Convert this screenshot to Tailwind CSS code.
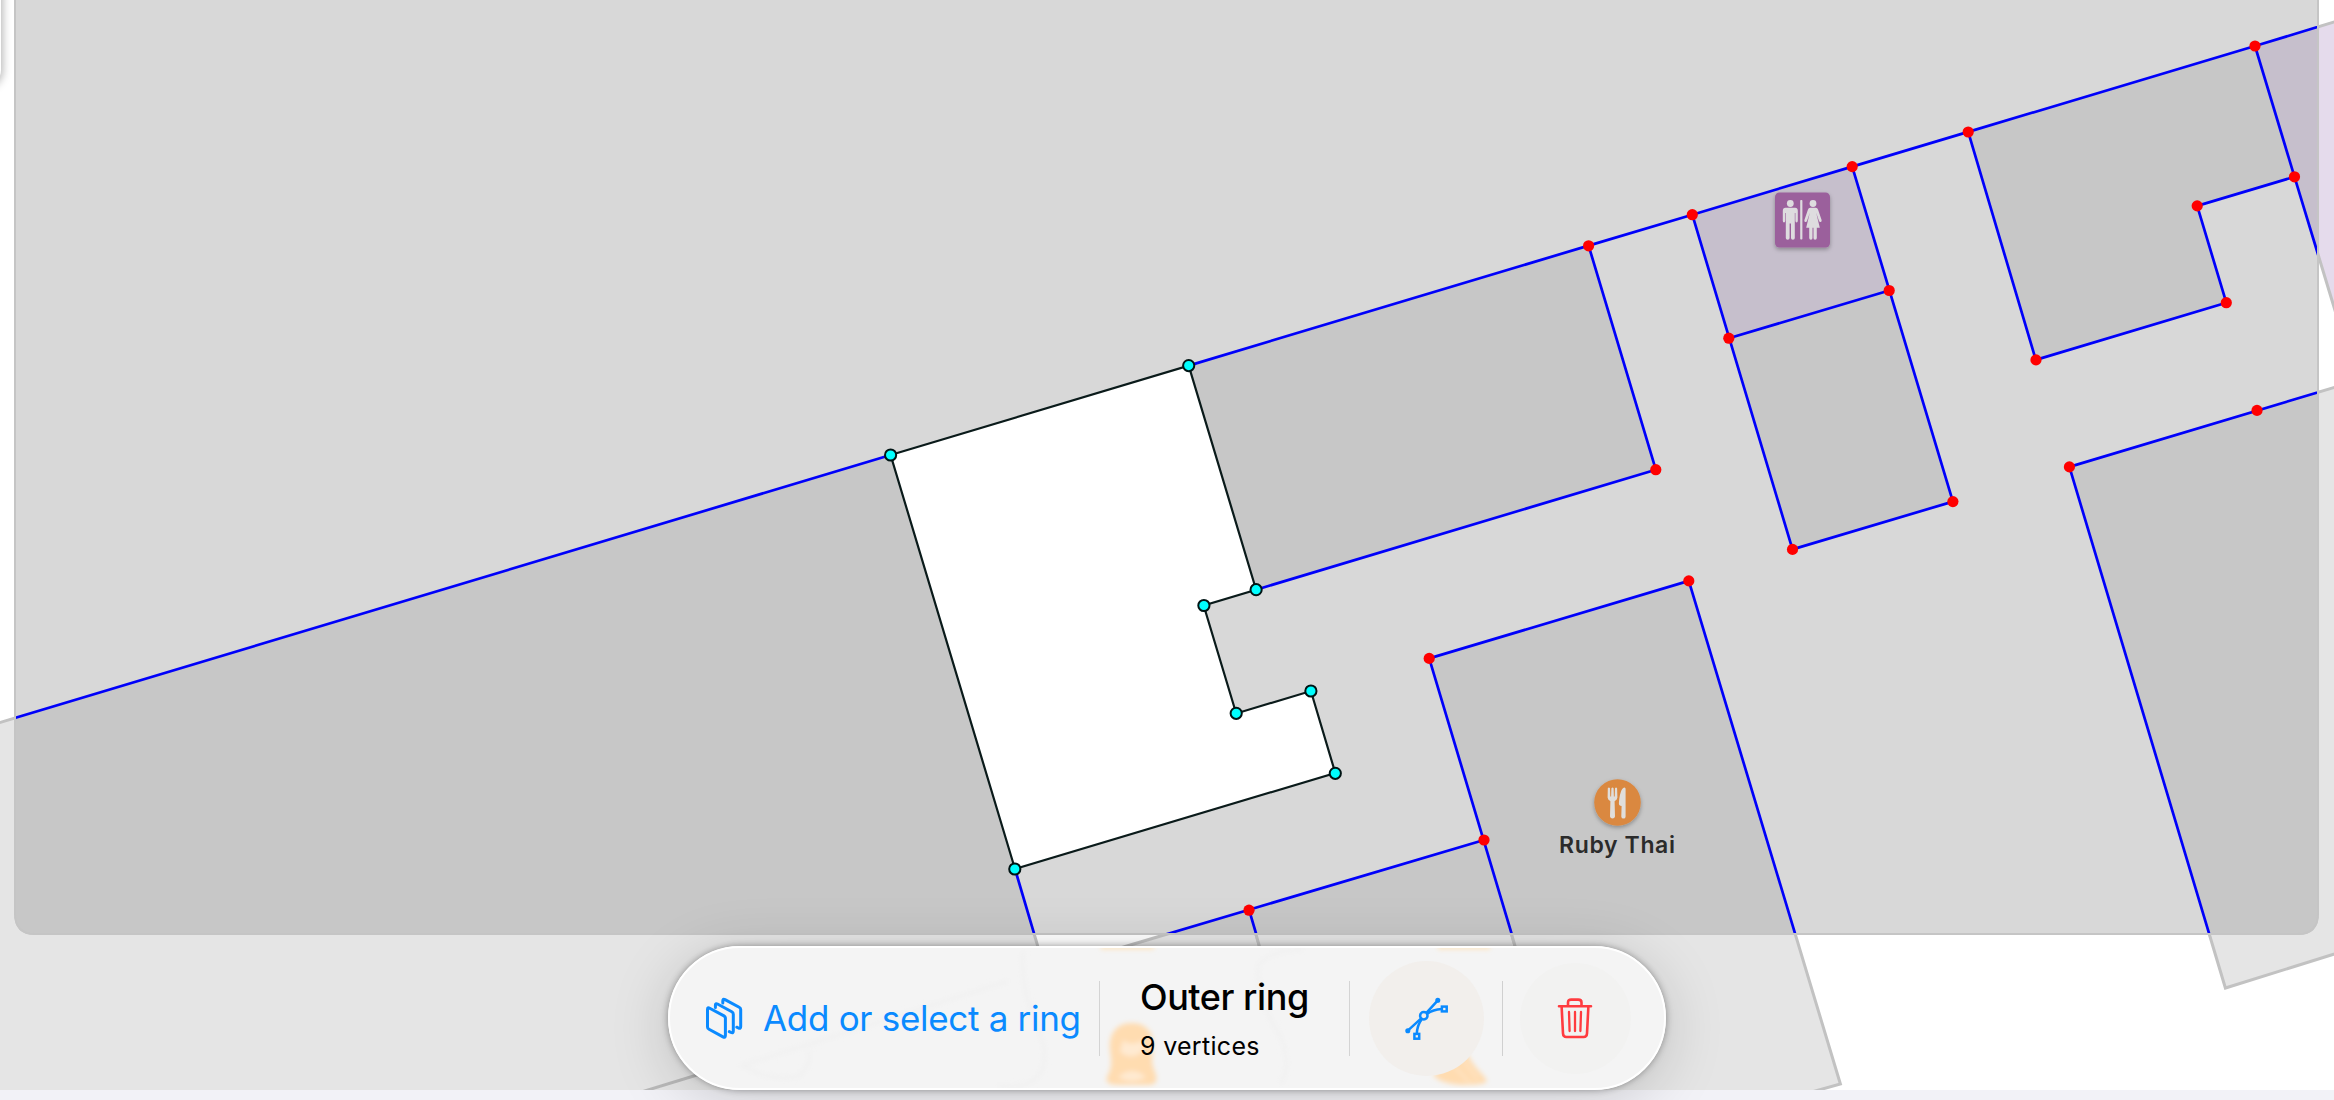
<!DOCTYPE html>
<html lang="en">
<head>
<meta charset="utf-8">
<title>Ring editor</title>
<script src="https://cdn.jsdelivr.net/npm/@tailwindcss/browser@4"></script>
</head>
<body class="flex h-[1100px] w-[2334px] flex-col overflow-hidden bg-[#f2f2f7] font-['Inter',sans-serif]">
<main class="relative h-[1090px] shrink-0 bg-white">
  <svg class="block" width="2334" height="1090" viewBox="0 0 2334 1090" fill="none">
    <defs>
      <clipPath id="edit"><path d="M16 0H2317V933H16Z"/></clipPath>
      <clipPath id="frame"><path d="M14 -20H2319V913Q2319 935 2298 935H35Q14 935 14 913Z"/></clipPath>
      <filter id="drop" x="-30%" y="-30%" width="160%" height="170%"><feDropShadow dx="0" dy="2" stdDeviation="2" flood-opacity=".3"/></filter>
      <g id="rooms">
        <path d="M-10 725.5L890.6 455L1015 869L1083 1100H-10Z"/>
        <path d="M1188.7 365.6L1588.6 245.6L1655.8 469.7L1256.1 589.7Z"/>
        <path d="M1728.8 338.2L1889.2 290.5L1952.9 501.6L1792.5 549.4Z"/>
        <path d="M1968.2 131.9L2255 46L2294.5 176.8L2197.2 205.9L2226.3 302.7L2035.8 359.9Z"/>
        <path d="M2069.4 466.9L2344 384.5V951L2225.4 988Z"/>
        <path d="M1090 957L1249 909.7L1303 1100H1083Z"/>
        <path d="M1249 909.7L1484 840L1560 1100H1303Z"/>
        <path d="M1429.2 658.4L1688.8 580.9L1840.4 1084L1783 1100H1560L1484 840Z"/>
      </g>
      <g id="restrooms">
        <path d="M1692.3 214.7L1852.2 166.6L1889.2 290.5L1728.8 338.2Z"/>
        <path d="M2255 46L2344 19V340L2294.5 176.8Z"/>
      </g>
    </defs>

    <!-- base map -->
    <use href="#rooms" fill="#e5e5e5" stroke="#c2c2c2" stroke-width="3"/>
    <use href="#restrooms" fill="#e5dbec" stroke="#c2c2c2" stroke-width="3"/>
    <path d="M643 1091.5L710 1071" stroke="#b9b9b9" stroke-width="3"/>

    <!-- editable area -->
    <g clip-path="url(#frame)">
      <path d="M14 0H2319V935H14Z" fill="#d8d8d8"/>
      <use href="#rooms" fill="#c7c7c7"/>
      <use href="#restrooms" fill="#c6bfcc"/>
      <path d="M15 -20V913Q15 934 35 934H2298Q2318 934 2318 913V-20" stroke="#c5c5c5" stroke-width="2"/>
    </g>
    <g clip-path="url(#edit)">
      <g stroke="#0000fa" stroke-width="2.7" stroke-linejoin="round">
        <path d="M-10 725.5L890.6 455M1188.7 365.6L1588.6 245.6L1692.3 214.7L1852.2 166.6L1968.2 131.9L2255 46L2344 19"/>
        <path d="M1588.6 245.6L1655.8 469.7L1256.1 589.7"/>
        <path d="M1692.3 214.7L1792.5 549.4L1952.9 501.6L1852.2 166.6M1728.8 338.2L1889.2 290.5"/>
        <path d="M1968.2 131.9L2035.8 359.9L2226.3 302.7L2197.2 205.9L2294.5 176.8M2255 46L2294.5 176.8L2344 340"/>
        <path d="M2344 384.5L2069.4 466.9L2225.4 988"/>
        <path d="M1512 935L1429.2 658.4L1688.8 580.9L1795.5 935"/>
        <path d="M1164 935L1249 909.7L1484 840M1249 909.7L1256.5 935M1015 869L1034.5 935"/>
      </g>
    </g>
    <path d="M890.6 455L1188.7 365.6L1256.1 589.7L1203.7 605.5L1236.2 713.5L1310.9 691L1335.3 773L1015 869Z" fill="#fff" stroke="#0a1a1a" stroke-width="2.2"/>
    <g fill="#ff0000">
      <circle cx="1588.6" cy="245.8" r="5.6"/><circle cx="1655.8" cy="469.7" r="5.6"/><circle cx="1692.3" cy="214.7" r="5.6"/>
      <circle cx="1852.2" cy="166.6" r="5.6"/><circle cx="1728.8" cy="338.2" r="5.6"/><circle cx="1889.2" cy="290.5" r="5.6"/>
      <circle cx="1952.9" cy="501.6" r="5.6"/><circle cx="1792.5" cy="549.4" r="5.6"/><circle cx="1968.2" cy="132" r="5.6"/>
      <circle cx="2255" cy="46" r="5.6"/><circle cx="2197.2" cy="205.9" r="5.6"/><circle cx="2294.5" cy="176.8" r="5.6"/>
      <circle cx="2226.3" cy="302.7" r="5.6"/><circle cx="2036" cy="359.9" r="5.6"/><circle cx="2257" cy="410.4" r="5.6"/>
      <circle cx="2069.4" cy="466.9" r="5.6"/><circle cx="1688.8" cy="580.9" r="5.6"/><circle cx="1429.2" cy="658.4" r="5.6"/>
      <circle cx="1484" cy="840" r="5.6"/><circle cx="1249" cy="910.2" r="5.6"/>
    </g>
    <g fill="#00ffff" stroke="#001414" stroke-width="2">
      <circle cx="890.6" cy="455" r="5.6"/><circle cx="1188.7" cy="365.6" r="5.6"/><circle cx="1256.1" cy="589.7" r="5.6"/>
      <circle cx="1203.9" cy="605.5" r="5.6"/><circle cx="1236.2" cy="713.3" r="5.6"/><circle cx="1310.9" cy="691" r="5.6"/>
      <circle cx="1335.3" cy="773.3" r="5.6"/><circle cx="1014.8" cy="869" r="5.6"/>
    </g>

    <!-- restroom marker -->
    <g transform="translate(1775 192.5)">
      <rect width="55" height="55" rx="4.5" fill="#9b609c" filter="url(#drop)"/>
      <g fill="#dedcdf">
        <circle cx="15.3" cy="11" r="3.4"/>
        <path d="M10.5 15.3H20.1Q22.8 15.3 22.8 18.3V28.3Q22.8 30 21.6 30T20.4 28.3V20.5H19.8V45.5Q19.8 47.3 17.9 47.3T16 45.5V31H14.6V45.5Q14.6 47.3 12.7 47.3T10.8 45.5V20.5H10.2V28.3Q10.2 30 9 30T7.8 28.3V18.3Q7.8 15.3 10.5 15.3Z"/>
        <rect x="25.2" y="7.5" width="2.2" height="39.5" rx=".8"/>
        <circle cx="38" cy="11" r="3.4"/>
        <path d="M35.2 15.3H40.8Q42.5 15.3 43.1 17.2L46.6 27.4Q47 29 45.8 29.4T44 28.4L41.2 20.3L44.8 35.2H41.8V45.5Q41.8 47.3 40.1 47.3T38.5 45.5V35.2H37.5V45.5Q37.5 47.3 35.9 47.3T34.2 45.5V35.2H31.2L34.8 20.3L32 28.4Q31.5 29.8 30.2 29.4T29.4 27.4L32.9 17.2Q33.5 15.3 35.2 15.3Z"/>
      </g>
    </g>

    <!-- restaurant marker -->
    <g transform="translate(1594 779)">
      <circle cx="23.5" cy="23.5" r="23.3" fill="#da8841" filter="url(#drop)"/>
      <g fill="#e0dedb">
        <path d="M13.8 9.3Q14.9 7.6 16 9.3L16.3 17.6H17.1L17.4 9.3Q18.5 7.6 19.6 9.3L19.9 17.6H20.7L21 9.3Q22.1 7.6 23.1 9.3L23.4 18.5Q23.4 20.6 20.6 22.2L21 37.6Q20.6 39.6 18.5 39.6T16 37.6L16.4 22.2Q13.6 20.6 13.6 18.5Z"/>
        <path d="M31.6 10V37.4Q31.6 39.6 29.5 39.6T27.3 37.4L27.6 27Q24.8 26.6 24.9 24.5C25.3 16.5 27.2 8.6 30.4 8.4Q31.6 8.3 31.6 10Z"/>
      </g>
    </g>
    <text x="1559" y="852.5" textLength="116" font-family="Inter, sans-serif" font-size="23" font-weight="600" fill="#2b2b2b">Ruby Thai</text>
  </svg>
  <div class="absolute -left-[40px] -top-5 h-[106px] w-[41px] rounded-br-2xl bg-white shadow-[0_0_8px_2px_rgba(0,0,0,0.28)]"></div>
</main>

<!-- floating toolbar -->
<nav class="absolute left-[668px] top-[946px] flex h-36 w-[998px] items-center rounded-[72px] bg-[#f4f4f4] shadow-[0_0_7px_rgba(0,0,0,0.36),0_10px_60px_rgba(0,0,0,0.17)]">
  <svg class="absolute inset-0" width="998" height="144" viewBox="0 0 998 144" fill="none">
    <defs>
      <filter id="soft" x="-30%" y="-30%" width="160%" height="160%"><feGaussianBlur stdDeviation="2.5"/></filter>
      <clipPath id="pill"><rect width="998" height="144" rx="72"/></clipPath>
    </defs>
    <g clip-path="url(#pill)">
      <g filter="url(#soft)">
        <path d="M464 77C479 77 486 88 485 101C484 114 483 117 487 126Q492 139 480 139H451Q434 139 440 129C445 119 443 114 442 103C441 88 448 77 464 77Z" fill="#ffdcb0"/>
        <path d="M455 94Q463 101 475 94V105Q464 115 452 106ZM450 131Q464 119 478 131Q464 139 450 131Z" fill="#ffead2"/>
        <path d="M765 129L798 105C805 122 817 129 819 135Q817 139 795 139Q773 138 765 129Z" fill="#ffdcb0"/>
        <path d="M786 120L802 137M794 113L810 134" stroke="#ffe6c8" stroke-width="2"/>
        <path d="M433 1H486M770 1H822" stroke="#ffe3b8" stroke-width="4"/>
      </g>
      <g filter="url(#soft)" stroke="#f0f0f0" stroke-width="3">
        <path d="M72 120L340 35M355 5Q353 35 363 65Q386 112 370 130Q360 143 330 140M590 20Q600 4 635 4M590 20Q588 50 612 90Q625 120 612 138M75 120Q102 136 132 130Q145 116 140 104"/>
      </g>
    </g>
    <rect x="1" y="1" width="996" height="142" rx="71" stroke="#fff" stroke-width="2"/>
  </svg>

  <button class="relative flex h-full w-[431px] items-center pl-[37px] text-[#0a8aff]">
    <svg class="mt-px shrink-0" width="40" height="45" viewBox="15 11 40 45" fill="none" stroke="currentColor" stroke-width="3" stroke-linejoin="round" stroke-linecap="round">
      <path d="M17.5 24.4Q17.5 22 19.7 23.2L34 30.9Q35.4 31.7 35.4 33.2V50.5Q35.4 53.2 33 51.9L19 44.3Q17.5 43.5 17.5 42Z"/>
      <path d="M25.4 22.4V20.2Q25.4 17.9 27.5 19L41.8 26.8Q43.3 27.6 43.3 29.2V46Q43.3 48.6 41 47.5L39.3 46.6"/>
      <path d="M32.8 18V16Q32.8 13.4 35 14.6L49.2 22.2Q50.7 23 50.7 24.6V41.5Q50.7 44.2 48.4 43L46.8 42.2"/>
    </svg>
    <span class="ml-[18px] whitespace-nowrap text-[35px] leading-none tracking-[-0.3px]">Add or select a ring</span>
  </button>
  <span class="relative h-[75px] w-px bg-[#d4d4d4]"></span>
  <div class="relative flex h-full w-[249px] flex-col pl-10 text-black">
    <span class="mt-[31px] whitespace-nowrap text-[36px] font-medium leading-[40px] tracking-[-0.45px]">Outer ring</span>
    <span class="mt-[13px] whitespace-nowrap text-[25px] leading-[32px] tracking-[0.3px]">9 vertices</span>
  </div>
  <span class="relative h-[75px] w-px bg-[#d4d4d4]"></span>
  <button class="relative ml-[19px] flex size-[115px] shrink-0 items-center justify-center rounded-full bg-[#f2efec] text-[#0a8aff]" aria-label="Edit curve">
    <svg width="48" height="48" viewBox="0 0 48 48" fill="none" stroke="currentColor" stroke-width="2.5">
      <path d="M23.4 18.9L34.8 6.3M18.2 24.4L4.8 36.7"/>
      <path d="M24 19.9Q30 15.6 38.8 15M18.9 24.9Q14 31.5 13.8 39.8"/>
      <circle cx="20.8" cy="21.7" r="3.7"/>
      <rect x="38.9" y="12.6" width="4.8" height="4.8"/>
      <rect x="11.4" y="39.9" width="4.8" height="4.8"/>
      <circle cx="34.8" cy="6.3" r="1.3"/><circle cx="4.8" cy="36.7" r="1.3"/>
    </svg>
  </button>
  <span class="relative ml-[18px] h-[75px] w-px bg-[#d0d0d0]"></span>
  <button class="relative ml-[17px] flex size-[111px] shrink-0 items-center justify-center rounded-full bg-[#f2f2f1] pr-px text-[#ff3b3f]" aria-label="Delete ring">
    <svg width="36" height="42" viewBox="0 0 36 42" fill="none" stroke="currentColor" stroke-width="2.6" stroke-linecap="round" stroke-linejoin="round">
      <path d="M2 9.3H34M11 9V5.5Q11 2.6 14.2 2.6H21.3Q24.5 2.6 24.5 5.5V9M4.6 9.3L6 36.5Q6.2 40 9.4 40H26.6Q29.8 40 30 36.5L31.4 9.3"/>
      <path d="M12 15L12.6 34M18 15V34M24 15L23.4 34" stroke-width="2.3"/>
    </svg>
  </button>
</nav>
</body>
</html>
